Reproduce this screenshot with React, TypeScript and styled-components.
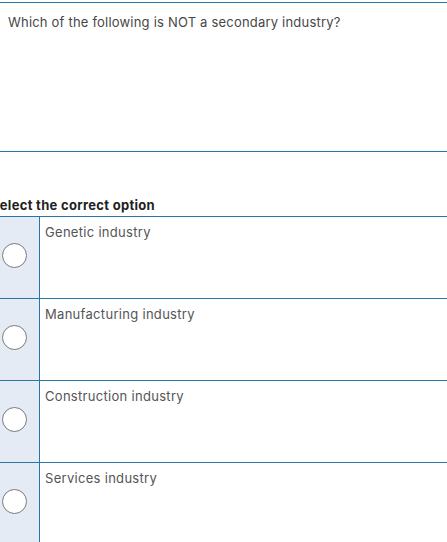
import React from 'react';
import styled, { createGlobalStyle } from 'styled-components';

const GlobalStyle = createGlobalStyle`
  html, body {
    margin: 0;
    padding: 0;
    background: #ffffff;
    overflow: hidden;
  }
  body {
    font-family: Inter, "Noto Sans", sans-serif;
  }
`;

const Page = styled.div`
  width: 447px;
  height: 542px;
  overflow: hidden;
  padding-top: 2px;
  box-sizing: border-box;
`;

const QuestionBox = styled.div`
  border-top: 1px solid #2a75a7;
  border-bottom: 1px solid #2a75a7;
  height: 150px;
  box-sizing: border-box;
  padding: 11px 8px;
`;

const QuestionText = styled.p`
  margin: 0;
  font-size: 13px;
  color: #474747;
  letter-spacing: 0.2px;
`;

const PromptTitle = styled.h3`
  margin: 43px 0 0 -9px;
  font-size: 13px;
  font-weight: 700;
  color: #1f1f1f;
  letter-spacing: 0.3px;
  height: 20px;
  line-height: 20px;
`;

const OptionList = styled.div`
  border-top: 1px solid #2a75a7;
  margin-top: 1px;
`;

const OptionRow = styled.label`
  display: grid;
  grid-template-columns: 40px 1fr;
  height: 82px;
  border-bottom: 1px solid #2a75a7;
  box-sizing: border-box;
  cursor: pointer;
`;

const RadioCell = styled.div`
  background: #e5ebf5;
  border-right: 1px solid #2a75a7;
  padding: 26px 0 0 2px;
`;

const RadioCircle = styled.span`
  display: block;
  width: 23px;
  height: 23px;
  border-radius: 50%;
  border: 1px solid #7a7a7a;
  background: #ffffff;
`;

const OptionText = styled.div`
  padding: 7px 5px;
  font-size: 13px;
  color: #555555;
  letter-spacing: 0.3px;
`;

const options = [
  'Genetic industry',
  'Manufacturing industry',
  'Construction industry',
  'Services industry',
];

export default function App() {
  return (
    <Page>
      <GlobalStyle />
      <QuestionBox>
        <QuestionText>Which of the following is NOT a secondary industry?</QuestionText>
      </QuestionBox>
      <PromptTitle>Select the correct option</PromptTitle>
      <OptionList>
        {options.map((o) => (
          <OptionRow key={o}>
            <RadioCell>
              <RadioCircle />
            </RadioCell>
            <OptionText>{o}</OptionText>
          </OptionRow>
        ))}
      </OptionList>
    </Page>
  );
}
